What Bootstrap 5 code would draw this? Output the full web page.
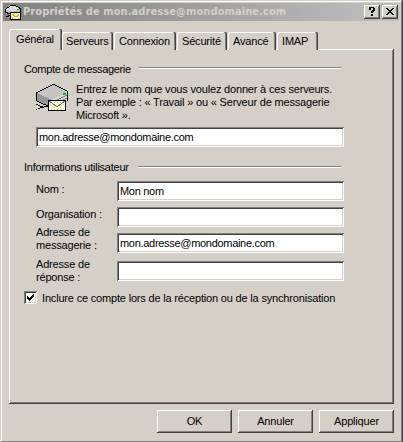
<!DOCTYPE html>
<html lang="fr">
<head>
<meta charset="utf-8">
<meta name="viewport" content="width=device-width, initial-scale=1">
<title>Propriétés de mon.adresse@mondomaine.com</title>
<link href="https://cdn.jsdelivr.net/npm/bootstrap@5.3.0/dist/css/bootstrap.min.css" rel="stylesheet">
<style>
:root{--face:#d4d0c8;--hi:#fff;--sh:#808080;--dk:#404040}
html,body{height:100%;overflow:hidden}
body{background:var(--face);font:11px/13px "Liberation Sans",Arial,sans-serif;letter-spacing:-.18px;color:#000}
.dialog{width:403px;height:443px;padding:3px 4px 0 3px;box-shadow:inset -1px -1px var(--dk),inset 1px 1px var(--face),inset -2px -2px var(--sh),inset 2px 2px var(--hi)}
.titlebar{height:18px;padding:0 1px 0 2px;background:linear-gradient(90deg,#808080,#c0c0c0)}
.caption{font:bold 11px/18px "DejaVu Sans Condensed","DejaVu Sans",sans-serif;font-stretch:condensed;color:var(--face);margin-left:2px;letter-spacing:.09px}
.raised{background:var(--face);border:0;border-radius:0;padding:0;color:#000;box-shadow:inset -1px -1px var(--dk),inset 1px 1px var(--hi),inset -2px -2px var(--sh)}
.capbtn{width:16px;height:14px}
.tabs{height:20px;margin:8px 0 0 6px;border:0}
.tabs .nav-link{height:18px;padding:3px 0 0 4px;border:0;border-radius:2px 2px 0 0;color:#000;line-height:13px;white-space:nowrap;background:var(--face);box-shadow:inset -1px 0 var(--dk),inset -2px 0 var(--sh),inset 1px 1px var(--hi);text-align:left;display:flex;align-items:flex-start;letter-spacing:inherit}
.tabs .nav-link.active{height:21px;width:53px;padding:4px 0 0 7px;margin-bottom:-1px;background:var(--face);color:#000;z-index:1;position:relative}
.page{width:385px;height:355px;margin-left:6px;padding:14px 0 0 15px;box-shadow:inset -1px -1px var(--dk),inset 1px 1px var(--hi),inset -2px -2px var(--sh)}
.legend-row{height:13px;white-space:nowrap;letter-spacing:-.35px}
.rule{height:2px;border-top:1px solid var(--sh);border-bottom:1px solid var(--hi);margin-top:4px}
.field{height:20px;border:0;border-radius:0;padding:0 3px;font-size:11px;letter-spacing:-.3px;line-height:18px;color:#000;background:#fff;box-shadow:inset 1px 1px var(--sh),inset -1px -1px var(--hi),inset 2px 2px var(--dk),inset -2px -2px var(--face)}
.field:focus{color:#000;box-shadow:inset 1px 1px var(--sh),inset -1px -1px var(--hi),inset 2px 2px var(--dk),inset -2px -2px var(--face)}
.frow label{width:81px;flex:none}
.frow .field{width:227px}
.check{width:13px;height:13px;background:#fff;box-shadow:inset 1px 1px var(--sh),inset -1px -1px var(--hi),inset 2px 2px var(--dk),inset -2px -2px var(--face)}
.cmd{width:75px;height:23px;font-size:11px;line-height:23px;letter-spacing:inherit}
svg{display:block;flex:none}
</style>
<script src="https://cdn.jsdelivr.net/npm/bootstrap@5.3.0/dist/js/bootstrap.bundle.min.js"></script>
</head>
<body>
<main class="dialog">
  <header class="titlebar d-flex align-items-center">
    <svg width="16" height="16" viewBox="0 0 16 16" shape-rendering="crispEdges">
      <path d="M0 5L6 1H10L15 4V10L8 13L0 8Z" fill="#c0c0c0"/>
      <path d="M0 5L6 1H10L15 4L8 8Z" fill="#dcdcdc"/>
      <path d="M0 5.5L6 1.5H10L15.5 4.5V10M0 5V8L5 10" fill="none" stroke="#000"/>
      <path d="M1 12h2v-1h2" fill="none" stroke="#000"/>
      <path d="M12 5h2v1h-2z" fill="#0a0"/>
      <path d="M5.500 8.500h10v7h-10z" fill="#ffffc0" stroke="#000"/>
      <path d="M7 10h1v1h1v1h3v-1h1v-1h1M7 14h1M13 14h1" fill="none" stroke="#c8b400"/>
    </svg>
    <span class="caption">Propriétés de mon.adresse@mondomaine.com</span>
    <button class="raised capbtn ms-auto" aria-label="Aide"><svg width="16" height="14" shape-rendering="crispEdges"><path d="M5 2h5v1h1v3h-1v1h-1v1h-2v-2h1v-1h1v-2h-2v2h-2zM7 9h2v2h-2z"/></svg></button>
    <button class="raised capbtn" style="margin-left:2px" aria-label="Fermer"><svg width="16" height="14" shape-rendering="crispEdges"><path d="M4 3h2v1h1v1h2v-1h1v-1h2v1h-1v1h-1v1h-1v1h1v1h1v1h1v1h-2v-1h-1v-1h-2v1h-1v1h-2v-1h1v-1h1v-1h1v-1h-1v-1h-1v-1h-1z"/></svg></button>
  </header>
  <nav class="tabs nav nav-tabs flex-nowrap align-items-end">
    <button class="nav-link active">Général</button>
    <button class="nav-link" style="width:51px">Serveurs</button>
    <button class="nav-link" style="width:62px;margin-left:1px;padding-left:5px">Connexion</button>
    <button class="nav-link" style="width:50px;margin-left:1px;padding-left:5px">Sécurité</button>
    <button class="nav-link" style="width:48px;margin-left:1px;padding-left:5px">Avancé</button>
    <button class="nav-link" style="width:41px;margin-left:1px;padding-left:5px">IMAP</button>
  </nav>
  <section class="page">
    <div class="legend-row d-flex"><span style="width:115px">Compte de messagerie</span><div class="rule" style="width:202px"></div></div>
    <div class="d-flex" style="margin:7px 0 0 12px">
      <svg width="33" height="30" viewBox="0 0 33 30" shape-rendering="crispEdges">
        <path d="M1 10L17 1L32 9V17L17 25L1 18Z" fill="#b0b0b0"/>
        <path d="M1 10L17 1L32 9L16 17Z" fill="#c4c4c4"/>
        <path d="M16 17L32 9V17L17 25Z" fill="#d8d8d8"/>
        <path d="M1 10L16 17V24L1 18Z" fill="#989898"/>
        <path d="M0 9.500h2M2 8.500h2M4 7.500h2M6 6.500h2M8 5.500h2M10 4.500h2M12 3.500h2M14 2.500h2M16 1.500h3M19 2.500h2M21 3.500h2M23 4.500h2M25 5.500h2M27 6.500h2M29 7.500h2M31.500 8v10M.5 9V18M1 18.500h2M3 19.500h2M5 20.500h2M7 21.500h3M10 22.500h2" fill="none" stroke="#000"/>
        <path d="M17 19L31 12M18 21L31 15" fill="none" stroke="#808080"/>
        <path d="M27 10h3v2h-3z" fill="#00c000"/>
        <path d="M0 21.500h2M2 22.500h2M4 23.500h3M0 26.500h1M2 25.500h2M4 24.500h4M8 23.500h4" fill="none" stroke="#000"/>
        <path d="M12.500 17.500h17v10h-17z" fill="#fffff0" stroke="#000"/>
        <path d="M13 18L20 23H22L29 18" fill="none" stroke="#777"/>
        <path d="M14 21.500h1M16 23.500h1M15 25.500h1M18 24.500h1M21 26.500h1M24 24.500h1M27 25.500h1M27 21.500h1M21 19.500h1M18 19.500h1M24 19.500h1M18 26.500h1M25 26.500h1" stroke="#f0dc20"/>
      </svg>
      <div class="intro text-nowrap" style="margin-left:7px">Entrez le nom que vous voulez donner à ces serveurs.<br>Par exemple : « Travail » ou « Serveur de messagerie<br>Microsoft ».</div>
    </div>
    <input class="field form-control" style="width:308px;margin:5px 0 0 12px" value="mon.adresse@mondomaine.com" aria-label="Compte">
    <div class="legend-row d-flex" style="margin-top:14px;letter-spacing:-.25px"><span style="width:114px">Informations utilisateur</span><div class="rule" style="width:203px;margin-top:5px"></div></div>
    <div class="frow d-flex" style="margin:7px 0 0 12px"><label style="padding-top:2px">Nom :</label><input class="field form-control" value="Mon nom"></div>
    <div class="frow d-flex" style="margin:6px 0 0 12px"><label style="padding-top:1px">Organisation :</label><input class="field form-control"></div>
    <div class="frow d-flex" style="margin:-1px 0 0 12px"><label>Adresse de<br>messagerie :</label><input class="field form-control" style="margin-top:7px" value="mon.adresse@mondomaine.com"></div>
    <div class="frow d-flex" style="margin:5px 0 0 12px"><label>Adresse de<br>réponse :</label><input class="field form-control" style="margin-top:3px"></div>
    <div class="d-flex text-nowrap" style="margin-top:7px"><span class="check"><svg width="13" height="13" shape-rendering="crispEdges"><path d="M3 5h1v1h1v1h1v-1h1v-1h1v-1h1v-1h1v3h-1v1h-1v1h-1v1h-1v1h-1v-1h-1v-1h-1z"/></svg></span><span class="incl" style="margin-left:5px;padding-top:1px">Inclure ce compte lors de la réception ou de la synchronisation</span></div>
  </section>
  <footer class="d-flex" style="margin:6px 0 0 154px;gap:6px">
    <button class="raised cmd">OK</button><button class="raised cmd">Annuler</button><button class="raised cmd">Appliquer</button>
  </footer>
</main>
</body>
</html>
